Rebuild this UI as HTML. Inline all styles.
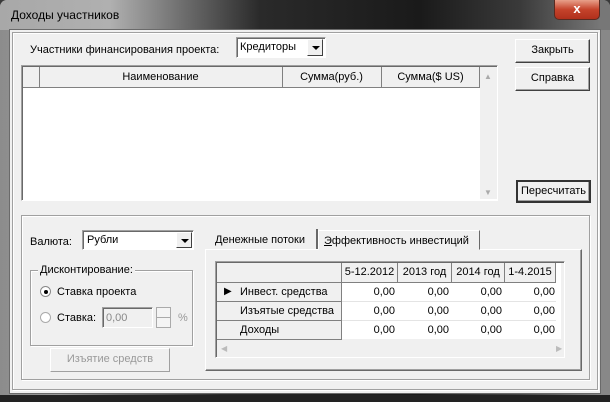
<!DOCTYPE html><html><head><meta charset="utf-8"><style>
*{box-sizing:border-box}
body{margin:0;width:610px;height:402px;overflow:hidden;background:#3a3a3a;font-family:"Liberation Sans",sans-serif;font-size:11px;color:#000;position:relative}
.a{position:absolute}
.t{position:absolute;white-space:nowrap;line-height:14px}
.btn{position:absolute;background:#f0f0f0;border:1px solid;border-color:#fff #404040 #404040 #fff;box-shadow:inset -1px -1px 0 #a0a0a0;text-align:center;line-height:21px;white-space:nowrap}
.sunk{border:1px solid;border-color:#a0a0a0 #fff #fff #a0a0a0;box-shadow:inset 1px 1px 0 #696969}
.etch{border:1px solid #a0a0a0;box-shadow:1px 1px 0 #fff, inset 1px 1px 0 #fff}
.dd{position:absolute;width:16px;background:#f0f0f0;border:1px solid;border-color:#fff #404040 #404040 #fff}
.dd:after{content:"";position:absolute;left:4px;top:6px;border-left:4px solid transparent;border-right:4px solid transparent;border-top:4px solid #000}
.cell{position:absolute;border-right:1px solid #808080;border-bottom:1px solid #808080;text-align:center;line-height:19px;white-space:nowrap;overflow:hidden}
</style></head><body>
<div class="a" style="left:0;top:0;width:610px;height:402px;background:linear-gradient(90deg,#8c8c8c 0,#9a9a9a 60px,#6a6a6a 120px,#2a2a2a 220px,#1a1a1a 420px,#444 520px,#888 600px);border-radius:7px 7px 0 0"></div>
<div class="a" style="left:0;top:0;width:610px;height:30px;background:linear-gradient(90deg,#a8a8a8 0,#b0b0b0 110px,#707070 180px,#2a2a2a 260px,#1a1a1a 420px,#3a3a3a 520px,#777 600px);border-radius:7px 7px 0 0"></div>
<div class="a" style="left:0;top:395px;width:610px;height:7px;background:#222"></div>
<div class="t" style="left:11px;top:8px;font-size:12px;color:#000">Доходы участников</div>
<div class="a" style="left:554px;top:0;width:46px;height:20px;background:linear-gradient(#e8a08a,#c5432b 50%,#b0301c);border:1px solid #5a2a20;border-top:none;border-radius:0 0 5px 5px;color:#fff;text-align:center;font-weight:bold;font-size:13px;line-height:18px">x</div>
<div class="a" style="left:9px;top:29px;width:592px;height:365px;background:#f0f0f0;border:1px solid #6a6a6a"></div>
<div class="a etch" style="left:12px;top:32px;width:586px;height:358px"></div>

<div class="t" style="left:30px;top:43px">Участники финансирования проекта:</div>
<div class="a sunk" style="left:236px;top:37px;width:90px;height:21px;background:#fff"></div>
<div class="t" style="left:240px;top:40px">Кредиторы</div>
<div class="dd" style="left:307px;top:39px;height:17px"></div>

<div class="a sunk" style="left:21px;top:65px;width:477px;height:136px;background:#fff"></div>
<div class="a" style="left:23px;top:67px;width:457px;height:21px;background:#f0f0f0;border-bottom:1px solid #808080"></div>
<div class="a" style="left:39px;top:67px;width:1px;height:21px;background:#808080"></div>
<div class="a" style="left:282px;top:67px;width:1px;height:21px;background:#808080"></div>
<div class="a" style="left:381px;top:67px;width:1px;height:21px;background:#808080"></div>
<div class="a" style="left:479px;top:67px;width:1px;height:21px;background:#808080"></div>
<div class="t" style="left:39px;top:70px;width:243px;text-align:center">Наименование</div>
<div class="t" style="left:282px;top:70px;width:99px;text-align:center">Сумма(руб.)</div>
<div class="t" style="left:381px;top:70px;width:99px;text-align:center">Сумма($ US)</div>
<div class="a" style="left:480px;top:67px;width:17px;height:132px;background:#f0f0f0"></div>
<div class="t" style="left:484px;top:70px;color:#aaa;font-size:8px">▲</div>
<div class="t" style="left:484px;top:186px;color:#aaa;font-size:8px">▼</div>

<div class="btn" style="left:515px;top:39px;width:75px;height:24px">Закрыть</div>
<div class="btn" style="left:515px;top:67px;width:75px;height:24px">Справка</div>
<div class="btn" style="left:516px;top:180px;width:75px;height:23px;border:2px solid #333;line-height:18px">Пересчитать</div>

<div class="a etch" style="left:21px;top:215px;width:569px;height:165px"></div>
<div class="t" style="left:30px;top:235px">Валюта:</div>
<div class="a sunk" style="left:82px;top:230px;width:112px;height:20px;background:#fff"></div>
<div class="t" style="left:87px;top:233px">Рубли</div>
<div class="dd" style="left:176px;top:232px;height:16px"></div>

<div class="a etch" style="left:30px;top:270px;width:163px;height:76px"></div>
<div class="t" style="left:38px;top:263px;background:#f0f0f0;padding:0 2px">Дисконтирование:</div>
<div class="a" style="left:40px;top:286px;width:11px;height:11px;border-radius:50%;background:#fff;border:1px solid #888"></div>
<div class="a" style="left:44px;top:290px;width:4px;height:4px;border-radius:50%;background:#000"></div>
<div class="t" style="left:57px;top:285px">Ставка проекта</div>
<div class="a" style="left:40px;top:312px;width:11px;height:11px;border-radius:50%;background:#fff;border:1px solid #aaa"></div>
<div class="t" style="left:57px;top:311px">Ставка:</div>
<div class="a sunk" style="left:102px;top:307px;width:51px;height:21px;background:#f0f0f0"></div>
<div class="t" style="left:106px;top:311px;color:#888">0,00</div>
<div class="a" style="left:156px;top:307px;width:15px;height:21px;border:1px solid #aaa;background:#f4f4f4"></div>
<div class="a" style="left:157px;top:317px;width:13px;height:1px;background:#aaa"></div>
<div class="t" style="left:178px;top:311px;color:#999">%</div>
<div class="btn" style="left:50px;top:348px;width:120px;height:24px;color:#999;border-color:#fff #a0a0a0 #a0a0a0 #fff;box-shadow:none">Изъятие средств</div>

<div class="a" style="left:205px;top:249px;width:377px;height:122px;border:1px solid;border-color:#fff #696969 #696969 #fff;box-shadow:inset -1px -1px 0 #a0a0a0"></div>
<div class="t" style="left:215px;top:233px"><u>Д</u>енежные потоки</div>
<div class="a" style="left:318px;top:230px;width:162px;height:20px;border:1px solid;border-color:#fff #696969 transparent #fff;background:#f0f0f0"></div>
<div class="t" style="left:324px;top:234px"><u>Э</u>ффективность инвестиций</div>
<div class="a" style="left:316px;top:229px;width:2px;height:20px;background:#696969"></div>

<div class="a sunk" style="left:215px;top:261px;width:350px;height:97px;background:#f0f0f0"></div>
<div class="a" style="left:342px;top:263px;width:219px;height:76px;background:#fff"></div>
<div class="cell" style="left:217px;top:263px;width:125px;height:20px"></div>
<div class="cell" style="left:342px;top:263px;width:56px;height:20px;background:#f0f0f0">5-12.2012</div>
<div class="cell" style="left:398px;top:263px;width:54px;height:20px;background:#f0f0f0">2013 год</div>
<div class="cell" style="left:452px;top:263px;width:53px;height:20px;background:#f0f0f0">2014 год</div>
<div class="cell" style="left:505px;top:263px;width:51px;height:20px;background:#f0f0f0">1-4.2015</div>
<div class="cell" style="left:217px;top:283px;width:125px;height:19px;text-align:left;padding-left:23px;line-height:18px">Инвест. средства</div>
<div class="t" style="left:224px;top:285px;font-size:10px">▶</div>
<div class="cell" style="left:217px;top:302px;width:125px;height:19px;text-align:left;padding-left:23px;line-height:18px">Изъятые средства</div>
<div class="cell" style="left:217px;top:321px;width:125px;height:19px;text-align:left;padding-left:23px;line-height:18px">Доходы</div>
<div style="position:absolute;left:342px;top:283px;width:214px;line-height:19px;text-align:right">
<div style="display:flex"><span style="width:56px;padding-right:3px">0,00</span><span style="width:54px;padding-right:3px">0,00</span><span style="width:53px;padding-right:3px">0,00</span><span style="width:51px;padding-right:1px">0,00</span></div>
<div style="display:flex"><span style="width:56px;padding-right:3px">0,00</span><span style="width:54px;padding-right:3px">0,00</span><span style="width:53px;padding-right:3px">0,00</span><span style="width:51px;padding-right:1px">0,00</span></div>
<div style="display:flex"><span style="width:56px;padding-right:3px">0,00</span><span style="width:54px;padding-right:3px">0,00</span><span style="width:53px;padding-right:3px">0,00</span><span style="width:51px;padding-right:1px">0,00</span></div>
</div>
<div class="a" style="left:342px;top:301px;width:214px;height:1px;background:#e4e4e4"></div>
<div class="a" style="left:342px;top:320px;width:214px;height:1px;background:#e4e4e4"></div>
<div class="t" style="left:221px;top:342px;color:#bbb;font-size:8px">◀</div>
<div class="t" style="left:556px;top:342px;color:#bbb;font-size:8px">▶</div>
</body></html>
